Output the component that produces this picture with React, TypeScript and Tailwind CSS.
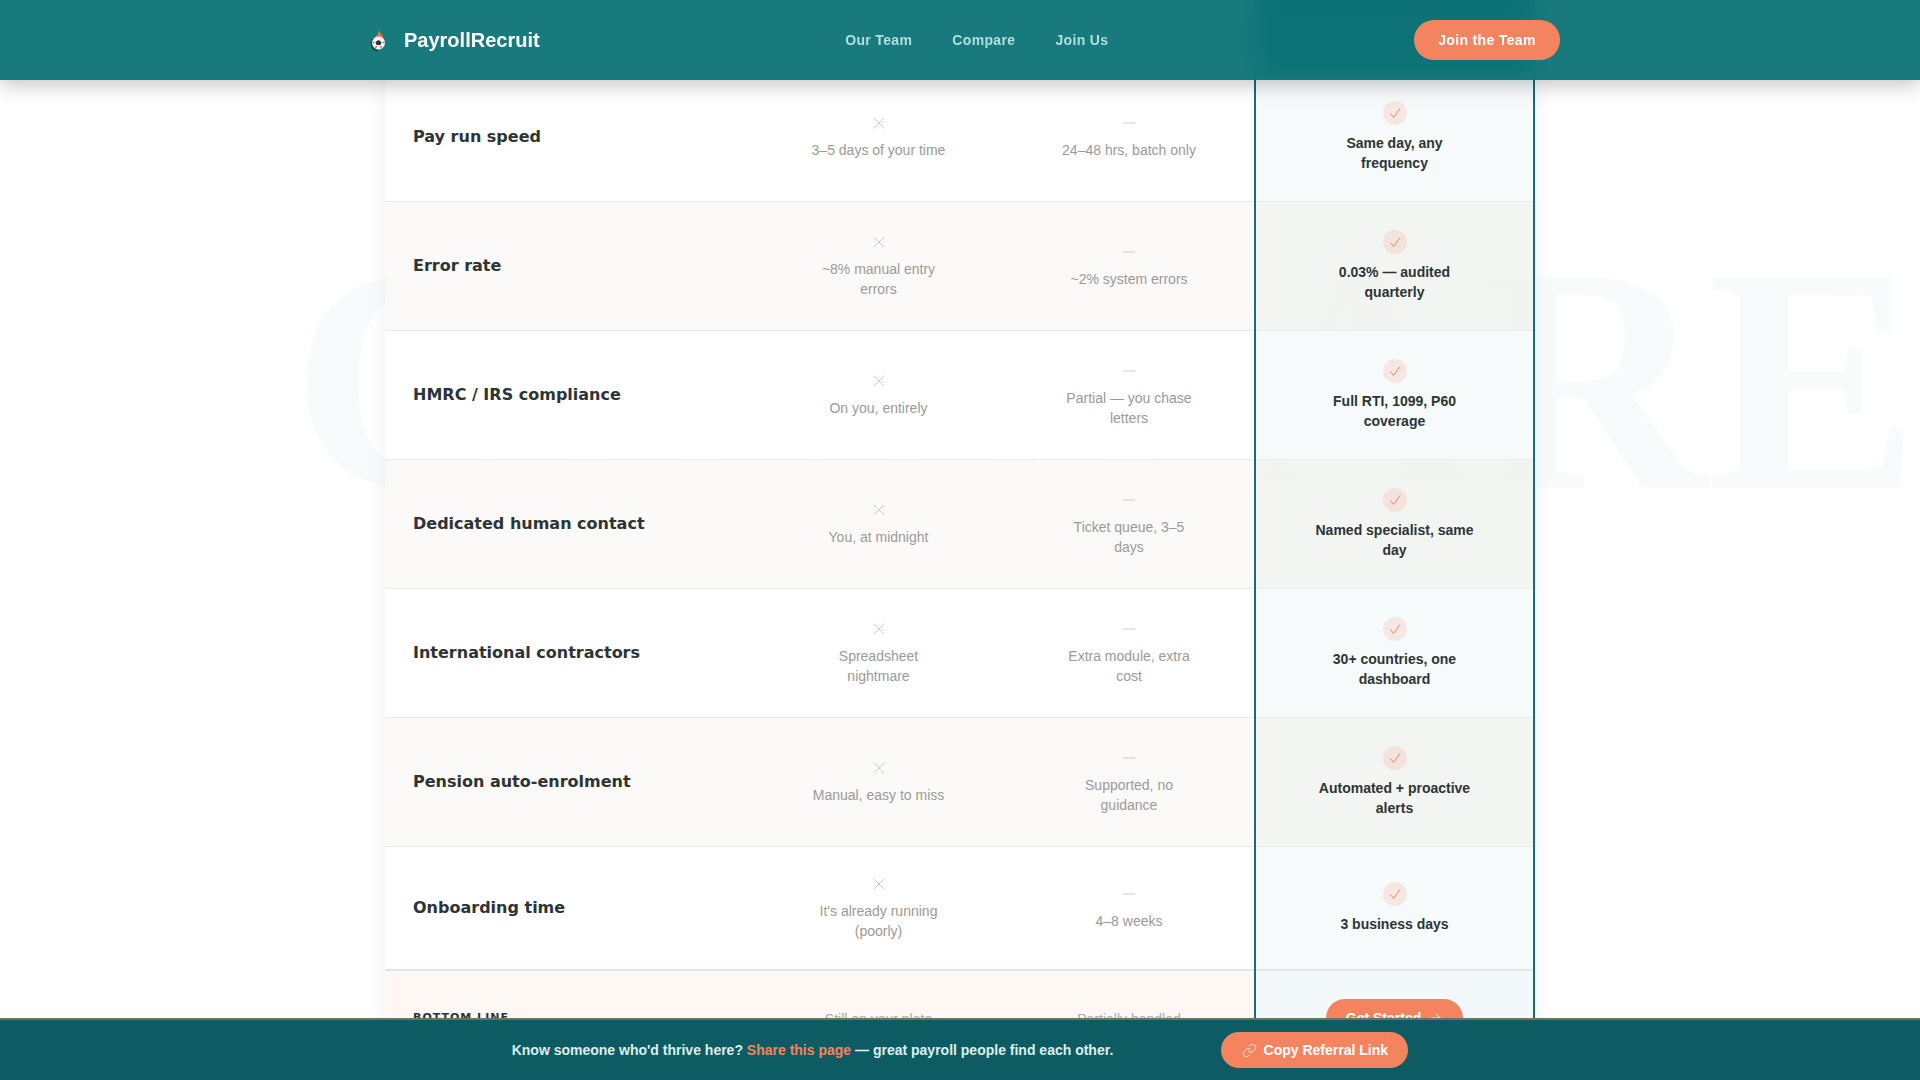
import { ArrowRight, Link, Minus, X } from 'lucide-react';

const rows = [
    { label: 'Pay run speed', diy: '3–5 days of your time', other: '24–48 hrs, batch only', us: 'Same day, any frequency' },
    { label: 'Error rate', diy: '~8% manual entry errors', other: '~2% system errors', us: '0.03% — audited quarterly' },
    { label: 'HMRC / IRS compliance', diy: 'On you, entirely', other: 'Partial — you chase letters', us: 'Full RTI, 1099, P60 coverage' },
    { label: 'Dedicated human contact', diy: 'You, at midnight', other: 'Ticket queue, 3–5 days', us: 'Named specialist, same day' },
    { label: 'International contractors', diy: 'Spreadsheet nightmare', other: 'Extra module, extra cost', us: '30+ countries, one dashboard' },
    { label: 'Pension auto-enrolment', diy: 'Manual, easy to miss', other: 'Supported, no guidance', us: 'Automated + proactive alerts' },
    { label: 'Onboarding time', diy: "It's already running (poorly)", other: '4–8 weeks', us: '3 business days' },
];

function Logo() {
    return (
        <svg width="32" height="32" viewBox="0 0 32 32" className="shrink-0">
            <path d="M19 5c-.5 3.500 4.500 6 5 11 .3 3-.5 5-1.500 6.500-1-4.500-4-7.500-8.500-8.500 3-2 5-5 5-9z" fill="#e8704a" />
            <path d="M12.500 14c-2.500 4-2.500 8 .5 11.500l5 3-1-3c-3-2-4-6-4.500-11.500z" fill="#0a4a4e" />
            <circle cx="18.500" cy="19" r="6.500" fill="#f7f3ee" />
            <path d="M18.500 16l3 2-1 3h-4l-1-3z" fill="#243438" />
            <path d="M12.500 18l2 1M24.500 18l-2 1M15.500 24l1-2M21.500 24l-1-2" stroke="#c9563a" strokeWidth="1.200" />
        </svg>
    );
}

function CheckMark() {
    return (
        <svg width="12" height="12" viewBox="0 0 12 12" fill="none" stroke="#f4845f" strokeWidth="1">
            <polyline points="1.500,6.500 4.500,10.500 11,1.500" />
        </svg>
    );
}

function Nav() {
    return (
        <nav className="fixed top-0 left-0 right-0 z-20 h-20 bg-[#0d7377]/95 backdrop-blur-md shadow-[0_4px_20px_rgba(0,0,0,0.25)]">
            <div className="mx-auto flex h-full max-w-[1200px] items-center justify-between">
                <div className="flex items-center gap-3">
                    <Logo />
                    <span className="text-[20px] font-bold text-white">PayrollRecruit</span>
                </div>
                <div className="flex items-center gap-10 text-sm font-bold tracking-[0.35px] text-[#b2dfdb]">
                    <span>Our Team</span>
                    <span>Compare</span>
                    <span>Join Us</span>
                </div>
                <button className="h-10 w-[146px] rounded-full bg-[#f4845f] text-sm font-bold tracking-[0.35px] text-white">
                    Join the Team
                </button>
            </div>
        </nav>
    );
}

function Row({ row, even, last }: { row: (typeof rows)[number]; even: boolean; last: boolean }) {
    return (
        <div className={`grid grid-cols-[368px_251px_250px_281px] ${last ? '' : 'border-b border-[#ebebeb]'} ${even ? 'bg-[#fbf9f6]/80' : 'bg-white'}`}>
            <div className="flex items-center px-7 font-['DejaVu_Sans',sans-serif] text-base font-bold text-[#2d3436]">
                {row.label}
            </div>
            <div className="flex flex-col items-center justify-center px-6 pt-[27px] pb-[28px] text-center text-sm leading-5 text-[#9a9a9a]">
                <X size={20} strokeWidth={1.2} className="mb-[7px] text-[#cccccc]" />
                <p className="w-[140px]">{row.diy}</p>
            </div>
            <div className="flex flex-col items-center justify-center px-6 pt-[27px] pb-[28px] text-center text-sm leading-5 text-[#9a9a9a]">
                <Minus size={20} strokeWidth={1.2} className="mb-[7px] text-[#cccccc]" />
                <p className="w-[140px]">{row.other}</p>
            </div>
            <div className={`flex flex-col items-center justify-center bg-[#0d7377]/4 px-6 text-center text-sm font-bold leading-5 text-[#2d3436] ${last ? '' : 'py-7'}`}>
                <div className="mb-2 flex h-6 w-6 items-center justify-center rounded-full bg-[#f4845f]/15">
                    <CheckMark />
                </div>
                <p className="w-[162px]">{row.us}</p>
            </div>
        </div>
    );
}

export default function App() {
    return (
        <div className="relative h-screen overflow-hidden bg-white font-['Liberation_Sans',Arial,sans-serif]">
            {/* Watermark */}
            <div className="pointer-events-none absolute left-[291px] top-[199px] whitespace-nowrap font-['Liberation_Serif',serif] text-[320px] font-bold leading-[360px] text-[#0d7377]/3">
                COMPARE
            </div>

            <Nav />

            <div className="relative mx-auto w-[1150px] shadow-[0_0_20px_rgba(0,0,0,0.06)]">
                <div className="grid h-[73px] grid-cols-[368px_251px_250px_281px]">
                    <div className="col-start-4 bg-[#0d5c63]" />
                </div>

                {rows.map((row, index) => (
                    <Row key={row.label} row={row} even={index % 2 === 1} last={index === rows.length - 1} />
                ))}

                {/* Bottom line */}
                <div className="grid grid-cols-[368px_251px_250px_281px] border-t-2 border-[#dce9e7] bg-[#fdf8f3]">
                    <div className="flex items-center px-7 pt-px font-['DejaVu_Sans',sans-serif] text-[11px] font-bold tracking-[1px] text-[#2d3436]">
                        BOTTOM LINE
                    </div>
                    <div className="flex items-center justify-center pt-px text-sm text-[#aaaaaa]">Still on your plate</div>
                    <div className="flex items-center justify-center pt-px text-sm text-[#aaaaaa]">Partially handled</div>
                    <div className="flex items-center justify-center bg-[#f3f8fa] py-7">
                        <button className="flex h-[38px] w-[137px] items-center justify-center gap-2 rounded-full bg-[#f4845f] text-sm font-bold text-white">
                            Get Started <ArrowRight size={14} strokeWidth={1.5} />
                        </button>
                    </div>
                </div>

                {/* Highlighted column outline */}
                <div className="pointer-events-none absolute top-0 bottom-0 right-0 w-[281px] border-x-2 border-[#0d7377]" />
            </div>

            {/* Referral bar */}
            <div className="fixed bottom-0 left-0 right-0 z-20 flex h-[62px] items-center justify-center gap-[108px] border-t-2 border-[#6e7263] bg-[#0d5c63]">
                <p className="text-sm font-bold text-[#dcefed]">
                    Know someone who'd thrive here? <span className="text-[#f4845f]">Share this page</span> — great payroll people find each other.
                </p>
                <button className="flex h-9 w-[187px] items-center justify-center gap-[7px] rounded-full bg-[#f4845f] text-sm font-bold text-white">
                    <Link size={15} strokeWidth={1.3} />
                    Copy Referral Link
                </button>
            </div>
        </div>
    );
}
